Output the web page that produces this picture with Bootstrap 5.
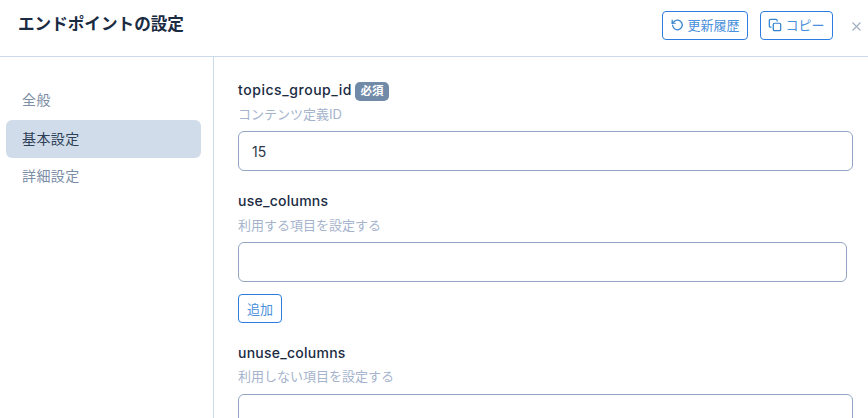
<!DOCTYPE html>
<html lang="ja">
<head>
<meta charset="utf-8">
<title>エンドポイントの設定</title>
<link rel="stylesheet" href="https://cdn.jsdelivr.net/npm/bootstrap@5.3.0/dist/css/bootstrap.min.css">
<style>
html,body{height:100%;overflow:hidden;background:#fff}
body{font-family:Inter,"Noto Sans CJK JP",sans-serif;color:#1a2b42}
.shell{height:418px;overflow:hidden}
.top-bar{height:57px;border-bottom:1px solid #cbd9e8;padding:0 6px 0 18px}
.top-title{font-size:16.6px;font-weight:700;color:#1a2b42;margin:0;position:relative;top:-3px}
.out-btn{font-size:13px;line-height:18px;padding:4px 7.5px;height:29px;color:#4a90dc;border:1px solid #2b7de0;border-radius:4px;background:#fff;display:inline-flex;align-items:center;gap:3px;white-space:nowrap;position:relative;top:-3px}
.out-btn svg{flex:none}
.close-x{width:11px;height:11px;margin-left:14px;position:relative;top:-2px}
.side{width:214px;flex:none;border-right:1px solid #cbd9e8;padding:25px 12px 0 6px;height:361px}
.side-item{height:38px;line-height:35px;padding-left:16px;font-size:14px;color:#7c8da6;border-radius:6px;letter-spacing:.4px}
.side-item.on{background:#d1dcea;color:#2d3f56;line-height:37px}
.main-area{padding:24px 15px 0 24px;min-width:0;flex:1}
.fld-name{font-size:14px;font-weight:500;line-height:17px;color:#1a2b42;letter-spacing:.25px}
.fld-name.spread{letter-spacing:.55px}
.req{font-size:11.5px;font-weight:600;line-height:15px;padding:2px 5.5px;background:#718aa8;color:#fff;border-radius:5px;margin-left:3px;display:inline-block;letter-spacing:0;vertical-align:0}
.fld-desc{font-size:13px;line-height:16px;height:16px;color:#a5b4cc;margin-top:8px;margin-bottom:9px}
.fld-desc.tight{margin-top:5px}
.fld-desc.tight-b{margin-top:7px;margin-bottom:10px}
.fld-input.form-control{height:40px;border:1px solid #92a5c2;border-radius:6px;font-size:14px;padding:0 13px;color:#2d3748;box-shadow:none}
.add-btn{font-size:13px;line-height:18px;height:29px;padding:4px 8px;color:#4a90dc;border:1px solid #2b7de0;border-radius:4px;background:#fff;margin-top:12px;display:block}
.wide-limit{width:609px}
.full-limit{width:615px}
.gap-a{margin-top:21px}
.gap-b{margin-top:21px}
</style>
</head>
<body>
<div class="shell">
  <div class="top-bar d-flex align-items-center">
    <h1 class="top-title flex-grow-1">エンドポイントの設定</h1>
    <button type="button" class="out-btn me-2 mb-0">
      <svg width="14" height="14" viewBox="0 0 16 16" fill="none" stroke="#3182ce" stroke-width="1.4" stroke-linecap="round" stroke-linejoin="round"><path d="M3 8a5.5 5.5 0 1 0 1.7-4L2.5 6"/><path d="M2.5 2.5V6H6"/></svg>
      更新履歴
    </button>
    <button type="button" class="out-btn mx-1">
      <svg width="14" height="14" viewBox="0 0 16 16" fill="none" stroke="#3182ce" stroke-width="1.4" stroke-linejoin="round" stroke-linecap="round"><rect x="6" y="6" width="8.5" height="8.5" rx="1.5"/><path d="M3.5 10.5H3A1.5 1.5 0 0 1 1.5 9V3A1.5 1.5 0 0 1 3 1.5H9A1.5 1.5 0 0 1 10.5 3v.5"/></svg>
      コピー
    </button>
    <svg class="close-x" viewBox="0 0 11 11" stroke="#a0aec0" stroke-width="1.1" fill="none"><path d="M1.5 1.5l8 8M9.5 1.5l-8 8"/></svg>
  </div>
  <div class="d-flex">
    <nav class="side">
      <div class="side-item">全般</div>
      <div class="side-item on">基本設定</div>
      <div class="side-item">詳細設定</div>
    </nav>
    <main class="main-area">
      <div class="full-limit">
        <div class="fld-name spread">topics_group_id<span class="req">必須</span></div>
        <div class="fld-desc tight">コンテンツ定義ID</div>
        <input class="form-control fld-input" type="text" value="15">
      </div>
      <div class="wide-limit gap-a">
        <div class="fld-name">use_columns</div>
        <div class="fld-desc">利用する項目を設定する</div>
        <input class="form-control fld-input" type="text">
        <button type="button" class="add-btn">追加</button>
      </div>
      <div class="full-limit gap-b">
        <div class="fld-name">unuse_columns</div>
        <div class="fld-desc tight-b">利用しない項目を設定する</div>
        <input class="form-control fld-input" type="text">
      </div>
    </main>
  </div>
</div>
</body>
</html>
